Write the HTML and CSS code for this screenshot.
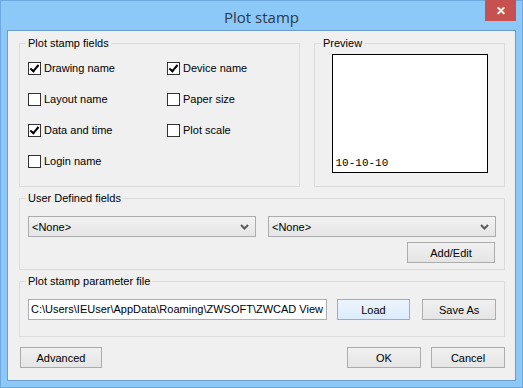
FILE: index.html
```html
<!DOCTYPE html>
<html lang="en">
<head>
    <meta charset="UTF-8">
    <title>Plot stamp</title>
    <link rel="stylesheet" href="styles.css">
</head>
<body>
    <div class="window">
        <div class="titlebar">
            <span class="title">Plot stamp</span>
            <span class="close">&#x2715;</span>
        </div>
        <div class="client">
            <div class="top-row">
                <div class="group fields">
                    <span class="legend">Plot stamp fields</span>
                    <div class="check-grid">
                        <label class="check"><span class="box checked"></span>Drawing name</label>
                        <label class="check"><span class="box checked"></span>Device name</label>
                        <label class="check"><span class="box"></span>Layout name</label>
                        <label class="check"><span class="box"></span>Paper size</label>
                        <label class="check"><span class="box checked"></span>Data and time</label>
                        <label class="check"><span class="box"></span>Plot scale</label>
                        <label class="check"><span class="box"></span>Login name</label>
                    </div>
                </div>
                <div class="group preview">
                    <span class="legend">Preview</span>
                    <div class="sheet">10-10-10</div>
                </div>
            </div>

            <div class="group user-fields">
                <span class="legend">User Defined fields</span>
                <div class="combos">
                    <div class="combo"><span>&lt;None&gt;</span><svg width="9" height="6" viewBox="0 0 9 6"><path d="M1 1 L4.5 4.5 L8 1" fill="none" stroke="#5a5a5a" stroke-width="2"/></svg></div>
                    <div class="combo"><span>&lt;None&gt;</span><svg width="9" height="6" viewBox="0 0 9 6"><path d="M1 1 L4.5 4.5 L8 1" fill="none" stroke="#5a5a5a" stroke-width="2"/></svg></div>
                </div>
                <div class="row-end">
                    <button class="btn add-edit">Add/Edit</button>
                </div>
            </div>

            <div class="group param-file">
                <span class="legend">Plot stamp parameter file</span>
                <div class="file-row">
                    <div class="path">C:\Users\IEUser\AppData\Roaming\ZWSOFT\ZWCAD View</div>
                    <button class="btn default">Load</button>
                    <button class="btn">Save As</button>
                </div>
            </div>

            <div class="footer">
                <button class="btn advanced">Advanced</button>
                <div class="footer-right">
                    <button class="btn">OK</button>
                    <button class="btn">Cancel</button>
                </div>
            </div>
        </div>
    </div>
</body>
</html>
```

FILE: styles.css
```css
* {
    box-sizing: border-box;
}
body {
    margin: 0;
    font-family: 'Liberation Sans', Arial, sans-serif;
    font-size: 11px;
    color: #000;
}
.window {
    width: 523px;
    height: 388px;
    background-color: #8cc8f8;
    border: 1px solid #6fa8dc;
    display: flex;
    flex-direction: column;
}
.titlebar {
    height: 29px;
    position: relative;
    display: flex;
    justify-content: center;
    align-items: center;
}
.title {
    font-family: 'Open Sans', 'Noto Sans', sans-serif;
    font-size: 15px;
    color: #2b3a4a;
    padding-top: 3px;
}
.close {
    position: absolute;
    top: -1px;
    right: 6px;
    width: 31px;
    height: 21px;
    background-color: #c75050;
    color: #fff;
    font-size: 12px;
    font-weight: bold;
    display: flex;
    justify-content: center;
    align-items: center;
}
.client {
    margin: 0 6px 6px 6px;
    flex: 1;
    background-color: #f0f0f0;
    border: 1px solid #6d9cc8;
    padding: 12px 10px 0 11px;
    display: flex;
    flex-direction: column;
}
.group {
    border: 1px solid #dcdcdc;
    padding: 0 8px 0 8px;
}
.legend {
    display: block;
    width: fit-content;
    margin: -7px 0 0 -2px;
    padding: 0 2px;
    line-height: 13px;
    background-color: #f0f0f0;
}
.top-row {
    display: flex;
    gap: 14px;
    height: 144px;
}
.fields {
    width: 281px;
}
.check-grid {
    margin-top: 12px;
    display: grid;
    grid-template-columns: 139px auto;
    row-gap: 18px;
}
.check {
    display: flex;
    align-items: center;
    gap: 3px;
    line-height: 13px;
    height: 13px;
}
.box {
    width: 13px;
    height: 13px;
    border: 1px solid #333;
    background-color: #fff;
    position: relative;
}
.box.checked::after {
    content: '';
    position: absolute;
    left: 3px;
    top: 0px;
    width: 3px;
    height: 7px;
    border: solid #000;
    border-width: 0 2px 2px 0;
    transform: rotate(40deg);
}
.preview {
    width: 191px;
    padding: 0 8px;
}
.sheet {
    margin: 4px auto 0 auto;
    width: 156px;
    height: 119px;
    background-color: #fff;
    border: 1px solid #000;
    display: flex;
    align-items: flex-end;
    padding: 0 0 2px 3px;
    font-family: 'Liberation Mono', 'Courier New', monospace;
    font-size: 11px;
    line-height: 13px;
}
.user-fields {
    margin-top: 11px;
    height: 72px;
}
.combos {
    margin-top: 11px;
    display: flex;
    gap: 12px;
}
.combo {
    width: 228px;
    height: 21px;
    border: 1px solid #acacac;
    background: linear-gradient(#f2f2f2, #e5e5e5);
    display: flex;
    align-items: center;
    justify-content: space-between;
    padding: 0 6px 0 3px;
}
.row-end {
    display: flex;
    justify-content: flex-end;
    padding-right: 1px;
    margin-top: 5px;
}
.btn {
    height: 21px;
    width: 74px;
    border: 1px solid #acacac;
    background: linear-gradient(#f0f0f0, #e5e5e5);
    font-family: 'Liberation Sans', Arial, sans-serif;
    font-size: 11px;
    color: #000;
    padding: 0;
}
.btn.default {
    border-color: #7eb4ea;
    background: linear-gradient(#ecf4fc, #dcecfc);
}
.add-edit {
    width: 88px;
}
.param-file {
    margin-top: 11px;
    height: 56px;
}
.file-row {
    margin-top: 11px;
    display: flex;
    align-items: center;
}
.path {
    width: 300px;
    height: 21px;
    border: 1px solid #abadb3;
    background-color: #fff;
    line-height: 19px;
    padding-left: 2px;
    white-space: nowrap;
    overflow: hidden;
    margin-right: 10px;
}
.file-row .btn + .btn {
    margin-left: 12px;
}
.footer {
    margin-top: 10px;
    display: flex;
    justify-content: space-between;
    padding-left: 1px;
}
.advanced {
    width: 82px;
}
.footer-right {
    display: flex;
    gap: 10px;
}
```
